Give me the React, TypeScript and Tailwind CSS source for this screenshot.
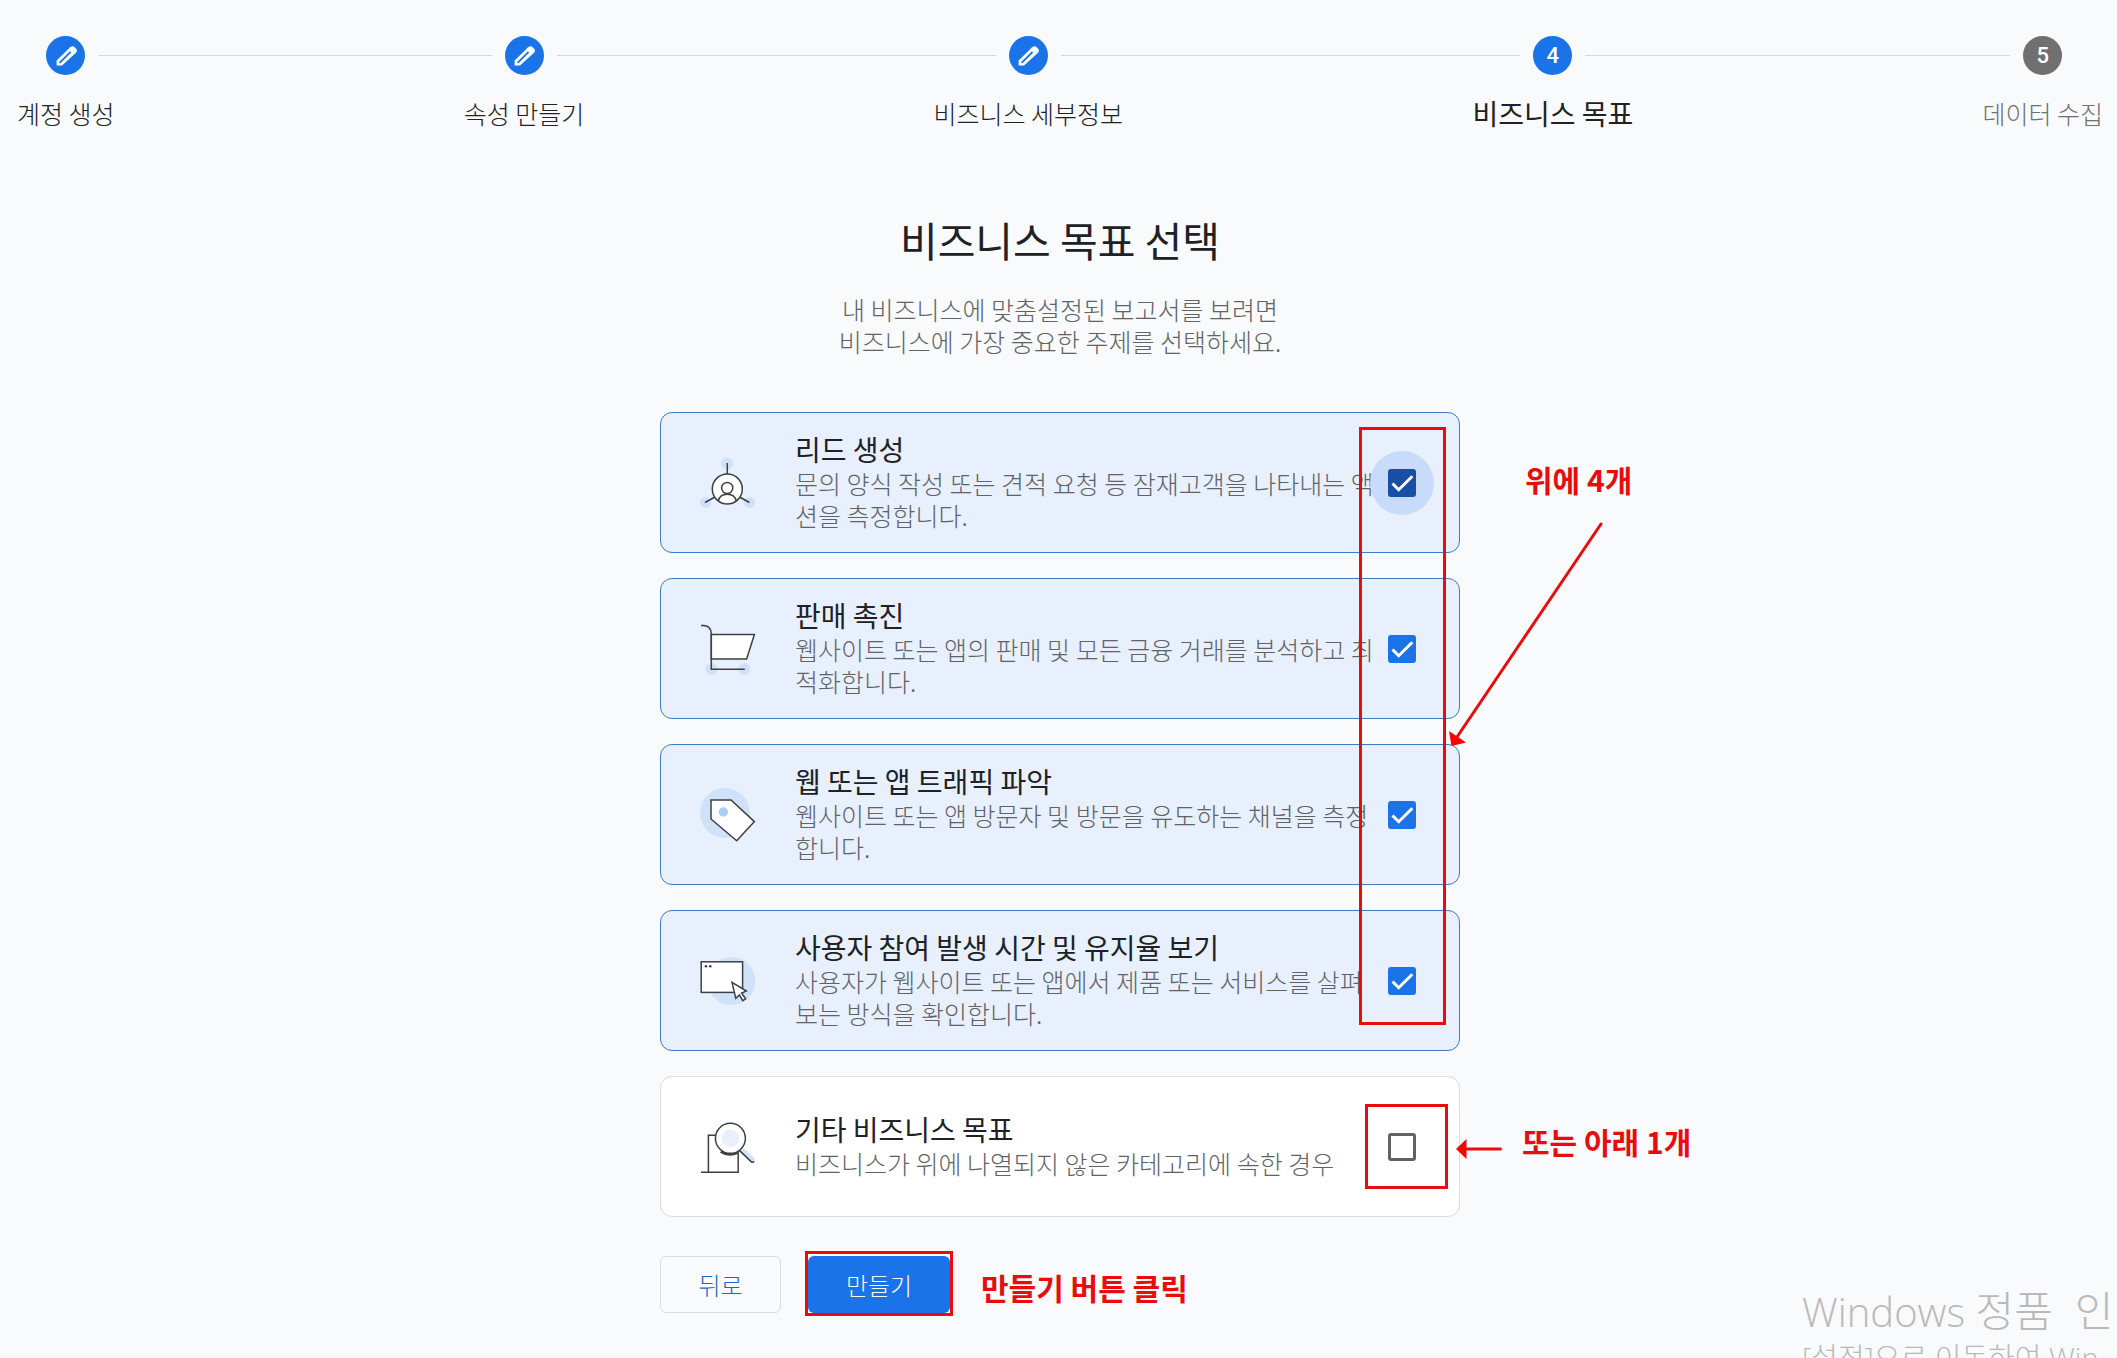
import type { ReactNode } from "react";

function PencilIcon() {
  return (
    <svg viewBox="0 0 24 24" className="size-6 overflow-visible" fill="none" aria-hidden="true">
      <path
        fill="#fff"
        d="M2.6 21.6V16.6L16.2 3.2Q18.3 1.2 20.4 3L22.2 4.8Q23.8 6.8 22 8.8L8 21.6Z"
      />
      <path d="M5.6 18.8 16.6 7.8" stroke="#1a73e8" strokeWidth="1.9" />
    </svg>
  );
}

type StepProps = {
  label: string;
  marker: ReactNode;
  state: "done" | "current" | "pending";
  first?: boolean;
  last?: boolean;
};

function Step({ label, marker, state, first, last }: StepProps) {
  const line = "h-px flex-1 bg-[#d5d7db]";
  return (
    <>
      {!first && (
        <li aria-hidden="true" className="flex h-[39px] flex-1 items-center">
          <span className={line} />
        </li>
      )}
      <li
        className="flex flex-col items-center"
        aria-current={state === "current" ? "step" : undefined}
      >
        <div className="flex w-full items-center gap-[13px]">
          <span className={first ? "h-px flex-1" : line} />
          <span
            className={
              "flex size-[39px] items-center justify-center rounded-full font-['Roboto'] text-[22px] font-medium text-white " +
              (state === "pending" ? "bg-[#707070]" : "bg-[#1a73e8]")
            }
          >
            {marker}
          </span>
          <span className={last ? "h-px flex-1" : line} />
        </div>
        <span
          className={
            "mt-5 leading-9 whitespace-nowrap " +
            (state === "current"
              ? "text-[28px] text-[#202124]"
              : state === "done"
                ? "text-[25px] font-light text-[#202124]"
                : "text-[25px] font-light text-[#707070]")
          }
        >
          {label}
        </span>
      </li>
    </>
  );
}

const INK = "#3c4043";
const TINT = "#d0e2fa";

function Drawing({ children }: { children: ReactNode }) {
  return (
    <svg
      viewBox="0 0 56 56"
      className="size-14 shrink-0 overflow-visible"
      fill="none"
      stroke={INK}
      strokeWidth="1.5"
      aria-hidden="true"
    >
      {children}
    </svg>
  );
}

function LeadIcon() {
  return (
    <Drawing>
      <g fill={TINT} stroke="none">
        <circle cx="28.3" cy="8.5" r="6" />
        <circle cx="6.4" cy="47.5" r="5.6" />
        <circle cx="50.4" cy="47.5" r="5.6" />
      </g>
      <path d="M28.3 8V19M6 47.5 16 42M50.5 47.5 40.5 42" />
      <circle cx="28.3" cy="34" r="15" fill="#fff" />
      <circle cx="28.2" cy="33" r="5.6" />
      <path d="M19.3 46C20.3 41.5 23.4 39.3 28.3 39.3S36.3 41.5 37.3 46" />
    </Drawing>
  );
}

function CartIcon() {
  return (
    <Drawing>
      <g fill={TINT} stroke="none">
        <circle cx="12.5" cy="48" r="6" />
        <circle cx="45.2" cy="48" r="6" />
      </g>
      <path fill="#fff" d="M12.3 13.5H55.4L47.6 38H12.3Z" />
      <path d="M2 4.4H4.8Q12.3 5 12.3 13V48.3H45.8" />
    </Drawing>
  );
}

function TagIcon() {
  return (
    <Drawing>
      <circle cx="26" cy="26" r="25" fill={TINT} stroke="none" />
      <path fill="#fff" d="M12 13H32L55.4 34.6 37.7 53.7 12 32Z" />
      <circle cx="24.3" cy="25" r="4.7" fill="#aecbfa" stroke="none" />
    </Drawing>
  );
}

function WindowIcon() {
  return (
    <Drawing>
      <circle cx="32.3" cy="28" r="24" fill={TINT} stroke="none" />
      <rect x="2.2" y="8.8" width="41.4" height="30.6" fill="#fff" />
      <g fill={INK} stroke="none">
        <circle cx="7" cy="13.3" r="1.3" />
        <circle cx="11.3" cy="13.3" r="1.3" />
      </g>
      <path fill="#fff" d="M33 29.4 47.4 38 42.6 40 46.6 45.8 43.8 47.6 40.4 41.9 36.8 45.4Z" />
    </Drawing>
  );
}

function SearchIcon() {
  return (
    <Drawing>
      <path d="M2 53.3H39.2V26H30V16.3H9.4V53.3" fill="#fff" />
      <path d="M22 32.3A17 17 0 0 0 38.5 33.2" strokeWidth="3.5" />
      <path d="M43.2 31 54.3 41.5" stroke={TINT} strokeWidth="5" />
      <path d="M40.4 31.4 52.3 42.8Q53.8 43.8 55.2 42.2" />
      <circle cx="31.4" cy="19.3" r="15" fill="#fff" />
      <circle cx="31.4" cy="19.3" r="8.8" fill="#e8f0fe" stroke="none" />
    </Drawing>
  );
}

type Goal = {
  id: string;
  title: string;
  lines: string[];
  icon: ReactNode;
  checked: boolean;
  focused?: boolean;
};

const goals: Goal[] = [
  {
    id: "leads",
    title: "리드 생성",
    lines: ["문의 양식 작성 또는 견적 요청 등 잠재고객을 나타내는 액", "션을 측정합니다."],
    icon: <LeadIcon />,
    checked: true,
    focused: true,
  },
  {
    id: "sales",
    title: "판매 촉진",
    lines: ["웹사이트 또는 앱의 판매 및 모든 금융 거래를 분석하고 최", "적화합니다."],
    icon: <CartIcon />,
    checked: true,
  },
  {
    id: "traffic",
    title: "웹 또는 앱 트래픽 파악",
    lines: ["웹사이트 또는 앱 방문자 및 방문을 유도하는 채널을 측정", "합니다."],
    icon: <TagIcon />,
    checked: true,
  },
  {
    id: "engagement",
    title: "사용자 참여 발생 시간 및 유지율 보기",
    lines: ["사용자가 웹사이트 또는 앱에서 제품 또는 서비스를 살펴", "보는 방식을 확인합니다."],
    icon: <WindowIcon />,
    checked: true,
  },
  {
    id: "other",
    title: "기타 비즈니스 목표",
    lines: ["비즈니스가 위에 나열되지 않은 카테고리에 속한 경우"],
    icon: <SearchIcon />,
    checked: false,
  },
];

function GoalCard({ goal }: { goal: Goal }) {
  return (
    <label
      htmlFor={goal.id}
      className={
        "flex min-h-[141px] items-center rounded-xl border pr-[25px] pl-[38px] " +
        (goal.checked ? "border-[#3c7cc4] bg-[#e8f0fe]" : "border-[#dadce0] bg-white")
      }
    >
      {goal.icon}
      <span className="ml-10 w-0 flex-1 pb-1 whitespace-nowrap">
        <span className="block text-[28px] leading-9 text-[#202124]">{goal.title}</span>
        {goal.lines.map((line) => (
          <span key={line} className="block text-[25px] leading-8 font-light text-[#5f6368]">
            {line}
          </span>
        ))}
      </span>
      <span
        className={
          "grid size-16 shrink-0 place-items-center rounded-full " + (goal.focused ? "bg-[#c8dbfa]" : "")
        }
      >
        <input
          id={goal.id}
          type="checkbox"
          defaultChecked={goal.checked}
          className={
            "peer col-start-1 row-start-1 size-7 appearance-none rounded-[3px] border-[3px] border-[#5f6368] " +
            (goal.focused
              ? "checked:border-[#174ea6] checked:bg-[#174ea6]"
              : "checked:border-[#1a73e8] checked:bg-[#1a73e8]")
          }
        />
        <svg
          viewBox="0 0 28 28"
          className="pointer-events-none invisible col-start-1 row-start-1 size-7 peer-checked:visible"
          fill="none"
          stroke="#fff"
          strokeWidth="3"
          aria-hidden="true"
        >
          <path d="M4.5 14.5 10.7 20.7 24.3 7.2" />
        </svg>
      </span>
    </label>
  );
}

function Note({ children }: { children: ReactNode }) {
  return <span className="text-[30px] leading-9 font-bold whitespace-nowrap text-[#e80c0c]">{children}</span>;
}

export default function App() {
  return (
    <div className="relative min-h-screen overflow-hidden bg-[#f8fafc] pl-[3px] font-['Noto_Sans_CJK_KR',sans-serif]">
      <nav aria-label="단계">
        <ol className="flex px-3.5 pt-9">
          <Step first label="계정 생성" marker={<PencilIcon />} state="done" />
          <Step label="속성 만들기" marker={<PencilIcon />} state="done" />
          <Step label="비즈니스 세부정보" marker={<PencilIcon />} state="done" />
          <Step label="비즈니스 목표" marker="4" state="current" />
          <Step last label="데이터 수집" marker="5" state="pending" />
        </ol>
      </nav>

      <main className="mx-auto mt-20 max-w-[800px]">
        <h1 className="text-center text-[41px] leading-14 text-[#202124]">비즈니스 목표 선택</h1>
        <p className="mt-[26px] text-center text-[25px] leading-8 font-light text-[#5f6368]">
          내 비즈니스에 맞춤설정된 보고서를 보려면
          <br />
          비즈니스에 가장 중요한 주제를 선택하세요.
        </p>

        <div className="relative mt-[55px]">
          <div className="flex flex-col gap-[25px]">
            {goals.map((goal) => (
              <GoalCard key={goal.id} goal={goal} />
            ))}
          </div>

          <div className="pointer-events-none absolute top-[15px] right-3.5 h-[598px] w-[87px] border-[3px] border-[#e80c0c]" />
          <div className="pointer-events-none absolute right-3 bottom-7 h-[85px] w-[83px] border-[3px] border-[#e80c0c]" />

          <div className="absolute top-[49px] left-full pl-[65px]">
            <Note>위에 4개</Note>
          </div>
          <svg
            viewBox="0 0 160 230"
            className="pointer-events-none absolute top-[108px] left-full -ml-3 h-[230px] w-40"
            aria-hidden="true"
          >
            <path d="M153 4 9 217" stroke="#e80c0c" strokeWidth="3" strokeLinecap="round" />
            <path d="M3.500 226 1 211 18 222.500Z" fill="#f00" />
          </svg>

          <div className="absolute bottom-[58px] left-full -ml-1 flex items-end gap-5">
            <svg viewBox="0 0 46 20" className="h-5 w-[46px]" aria-hidden="true">
              <path d="M8 10H44.500" stroke="#e80c0c" strokeWidth="3" strokeLinecap="round" />
              <path d="M0 10 10.500 0V20Z" fill="#f00" />
            </svg>
            <Note>또는 아래 1개</Note>
          </div>
        </div>

        <div className="mt-[34px] flex items-center">
          <button
            type="button"
            className="mt-0.5 h-[57px] w-[121px] rounded-md border border-[#dadce0] text-2xl font-light text-[#1967d2]"
          >
            뒤로
          </button>
          <div className="ml-6 border-[3px] border-[#e80c0c] bg-white pt-0.5">
            <button
              type="button"
              className="block h-[57px] w-[142px] rounded-md bg-[#1a73e8] text-2xl font-light text-white"
            >
              만들기
            </button>
          </div>
          <div className="pt-1.5 pl-7">
            <Note>만들기 버튼 클릭</Note>
          </div>
        </div>
      </main>

      <div className="pointer-events-none absolute top-[1285px] left-[1802px] font-['Open_Sans','Noto_Sans_CJK_KR',sans-serif] font-light whitespace-nowrap text-[#b9b9b9]">
        <p className="text-[40px] leading-[52px]">
          Windows <span className="text-[42px]">정품&nbsp; 인</span>
        </p>
        <p className="text-[29px] leading-10">[설정]으로 이동하여 Win</p>
      </div>
    </div>
  );
}
